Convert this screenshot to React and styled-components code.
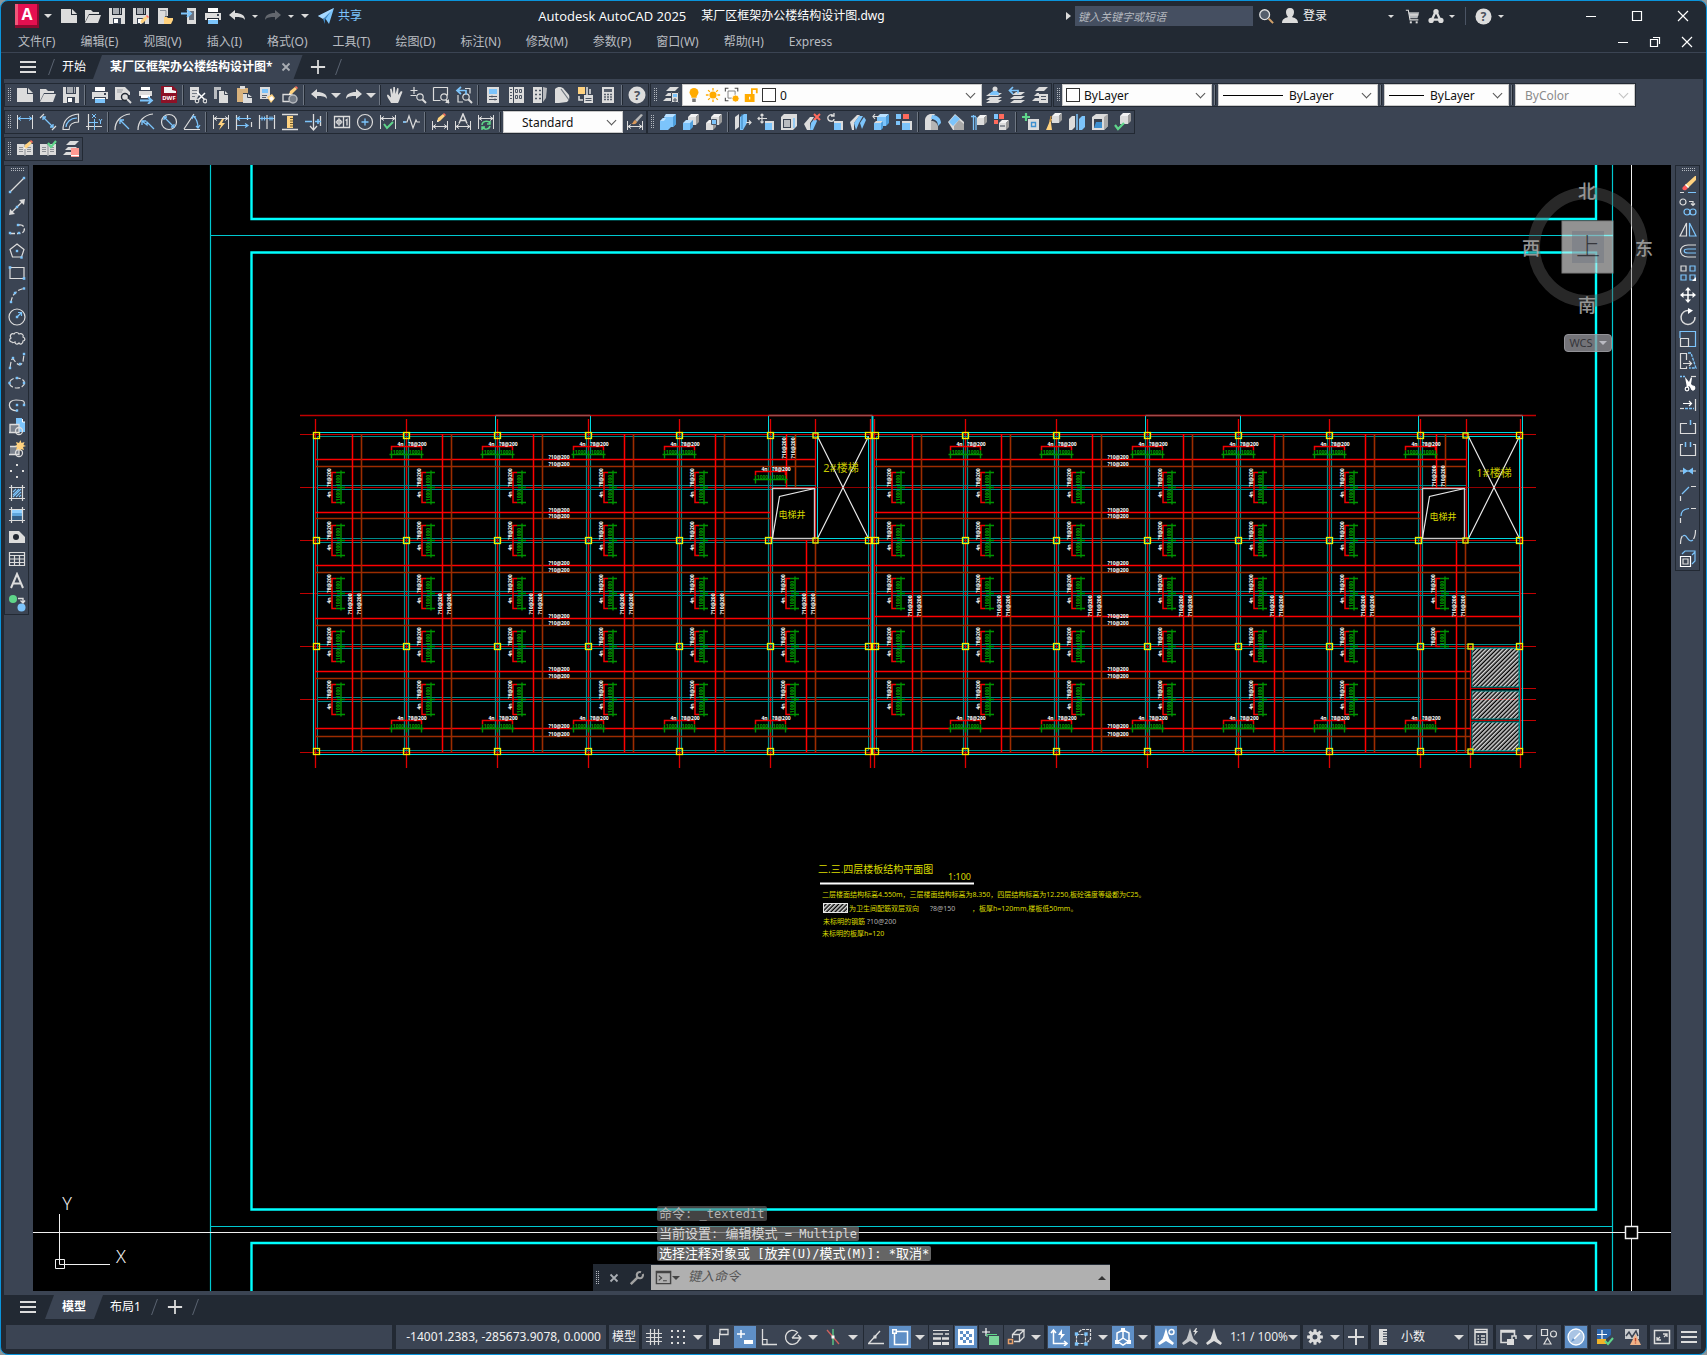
import React from "react";
import styled, { createGlobalStyle, css } from "styled-components";

/* ---------- palette ---------- */
const DARK = "#222933";
const MID = "#3b4453";
const ACCENT = "#5f8fc6";
const W = "#dcdcdc";
const B = "#7cc4fb";
const Y = "#ffd27f";
const G = "#5fd58a";
const R = "#ff6a5c";

const SANS = `"Noto Sans", "Noto Sans CJK SC", sans-serif`;
const MONO = `"DejaVu Sans Mono", "Noto Sans CJK SC", monospace`;

const Global = createGlobalStyle`
  *, *::before, *::after { box-sizing: border-box; }
  html, body { margin: 0; height: 100%; background: #8c979c; }
  body { font: 12px/16px ${SANS}; color: #f2f2f2; overflow: hidden; }
  button, input, select { font: inherit; color: inherit; margin: 0; border: 0; padding: 0; background: none; outline: 0; }
  a { color: inherit; text-decoration: none; }
`;

/* ---------- icon drawing helpers (18 x 18 grid) ---------- */
const g = (...k) => React.createElement("g", null, ...k);
const p = (d, c = W, w = 1.2, extra) => <path d={d} fill="none" stroke={c} strokeWidth={w} {...extra} />;
const f = (d, c = W) => <path d={d} fill={c} />;
const at = (x, y, node) => <g transform={`translate(${x} ${y})`}>{node}</g>;
const dots = (c, s, ...pts) => g(...pts.map(([x, y]) => <rect x={x - s / 2} y={y - s / 2} width={s} height={s} fill={c} />));
const circ = (x, y, r, c = W, w = 1.2, fill = "none") => <circle cx={x} cy={y} r={r} fill={fill} stroke={c} strokeWidth={w} />;
const pencil = g(f("M0 9l1-4 5-4 2 2-5 5z", Y), f("M6 1l1-1 2 2-1 1z", R), f("M0 9l.5-2L2 8.500z", "#fff"));
const cube = (x, y, s, front = B, side = "#a8a8a8", top = W, d = 4) =>
  g(
    f(`M${x} ${y + d}h${s}v${s}h-${s}z`, front),
    f(`M${x} ${y + d}l${d}-${d}h${s}l-${d} ${d}z`, top),
    f(`M${x + s} ${y + d}l${d}-${d}v${s}l-${d} ${d}z`, side)
  );
const disk = g(
  f("M1 1h3v7h10V1h3v16H1z"), f("M5 1h6v6H5zM12 1h1v6h-1z", "#a9adb3"), f("M5 11h8v6H5z", MID), f("M6 12h4v4H6z", "#fff"));
const printer = g(f("M4 1h10v4H4z", "#fff"), f("M1 6h16v7h-2v-2H3v2H1z"), f("M13 7h2v2h-2z", MID), f("M4 12h10v5H4z", B), p("M4 12.500h10", "#fff", 1));
const dimBar = (c = W) => g(p("M1.500 2v14M16.500 2v14", W, 1), p("M2 5.500h14M5 3.500l-3 2 3 2M13 3.500l3 2-3 2", c, 1));
const book = g(f("M1 4h7l1 1 1-1h7v11h-7l-1 1-1-1H1z"), p("M9 5v10M3 7.500h4M3 9.500h4M3 11.500h4M11 7.500h4M11 9.500h4M11 11.500h4", "#8c9096", 1));
const layers = (c = W) => g(f("M8 1h9l-4 4H4z", c), f("M6 7h9l-3 3H3z", c), f("M4 12h9l-3 3H1z", c));
const wedge = g(f("M1 9l7-7 3 0-6 8v7H3z", W), f("M5 10l5-7 4 0-4 7-3 7z", B), f("M11 10l4-6 2 3-4 9z", B));
const gearD = (() => {
  let d = "";
  for (let i = 0; i < 8; i++) {
    const a = (i * Math.PI) / 4;
    const pt = (r, o) => `${(9 + r * Math.cos(a + o)).toFixed(2)} ${(9 + r * Math.sin(a + o)).toFixed(2)}`;
    d += `${i ? "L" : "M"}${pt(5.5, -0.3)}L${pt(8, -0.18)}L${pt(8, 0.18)}L${pt(5.5, 0.3)}`;
  }
  return d + "zM9 6.500a2.500 2.500 0 1 0 0 5 2.500 2.500 0 0 0 0-5z";
})();
const person = "M9 1c3 0 4 2 4 4s-1 4-2 5c3 1 6 2 6 6H1c0-4 3-5 6-6-1-1-2-3-2-5s1-4 4-4z";
const scaleMan = "M9 0l2 7 1.500 4 4.500 4-1.500 2L9 13l-6.500 4L1 15l4.500-4L7 7z";

const ICONS = {
  new: g(f("M1 2h10v6h6v8H1z"), f("M12 2l5 5h-5z")),
  open: g(f("M1 3h6l2 2h6v2H5l-4 8z"), f("M5 8h12l-3 8H1z")),
  save: disk,
  saveas: g(disk, at(8, 8, pencil)),
  openMobile: g(f("M2 1h10v8H9l-1 8H2z"), p("M4 3.500h6v7", "#8a9099", 1), f("M8 10h3l1 1h5v2h-5l-2 4H8z", Y), f("M11 13h6l-2 4H9z", Y)),
  saveMobile: g(f("M7 1h9v16H7z"), f("M9 4h5v9H9z", "#6b7380"), p("M1 6.500h9M7 3l4 3.500L7 10", B, 1.800)),
  print: printer,
  undo: g(f("M1 8l6-5v3c6 0 10 2 10 7-2-3-5-3-10-3v3z")),
  redo: g(f("M17 8l-6-5v3C5 6 1 8 1 13c2-3 5-3 10-3v3z")),
  send: g(f("M1 9l16-8-5 16-4-6z", B), f("M6 12l8-8-6 9v4z", "#3f86c0"), f("M1 9l16-8L6 12z", "#a6d8ff")),
  preview: g(f("M1 1h10l5 5v3H1zM1 8h8v6H1z"), p("M3 4h6M3 6h5", "#9a9da2", 1), circ(11, 11, 3.5, "#222933", 1.4, W), p("M13 13l4 4", W, 2)),
  publish: g(f("M4 1h9v3H4z", "#fff"), f("M2 5h13v5H2z"), f("M4 9h9v3H4z", "#fff"), p("M3 14.500h12M11 11l4 3.500L11 18", B, 1.800)),
  dwf: g(f("M1 0h12l4 4v13H1z", "#8d1126"), f("M4 1h8v3l4 1v2H4z", "#f4f4f4"), <text x="9" y="14" textAnchor="middle" fontSize="6" fontWeight="700" fill="#fff">DWF</text>),
  cut: g(f("M1 1h9v8l-3 5H1z"), p("M3 4.500h5M3 7.500h5M3 10.500h3", "#777d86", 1), p("M8 6l8 8M16 7l-7 7", "#fff", 1.500), circ(8, 15, 1.800), circ(16, 15, 1.800)),
  copy: g(f("M2 1h7v3H5v9H2z", "#b9bcc0"), f("M7 5h6l3 3v9H7z"), p("M12.500 5v3.500H16", MID, 1)),
  paste: g(f("M2 2h11v5H8v9H2z", "#d9b27c"), f("M5 0h5v3H5z"), f("M8 8h5l4 3v6H8z"), p("M12.500 8v3.500H17", MID, 1)),
  match: g(f("M2 1h10v12H2z"), f("M4 3h6v4H4z", B), p("M4 9.500h5M4 11.500h4", "#5c6470", 1), f("M9 11l5-3 3 4-4 5z", Y), f("M11 12l3-2 2 3-3 2z", "#fff")),
  blockEdit: g(p("M2 8.500h9v7H2z", W, 1.300), circ(12, 13, 4, "#b5b8bd", 1.500, "#747b86"), at(8, 0, pencil)),
  pan: g(f("M5 17c-1-3-4-5-4-8l1-.5 3 3L4 3l1.500-.5L7 8l.3-7h1.600L9.500 8l1.700-6 1.400.4L12 9l3-4 1.500.8L14 12c-.5 2-1 3-2 5z")),
  zoomRt: g(p("M5 1v7M1.500 4.500h7M1.500 9.500h6", W, 1.200), circ(11, 11, 3.200), p("M13.500 13.500l3.500 3.500", W, 2)),
  zoomWin: g(p("M1.500 1.500h14v8M1.500 1.500v13h7", W, 1.200), circ(12, 11, 3.200), p("M14 14l3 3", W, 2), f("M13 17h4v-4z")),
  zoomPrev: g(p("M3 9v7h5M10 2.500h5v5", W, 1.200), circ(11, 11, 3.200), p("M13.500 13.500l3.500 3.500", W, 2), p("M2 4.500h9v4M6 1L2 4.500 6 8", B, 1.700)),
  props: g(f("M3 1h12v16H3z"), f("M5 3h8v5H5z", B), p("M5 10.500h8M5 13.500h8M8 9.500v2M11 12.500v2", "#4c5563", 1)),
  dc: g(f("M2 1h4v16H2zM7 1h10v16H7z"), p("M3 3.500h2M3 6.500h2M3 9.500h2M3 12.500h2", "#4c5563", 1), p("M8.500 3.500h2v3h-2zM12.500 3.500h2v3h-2zM8.500 9.500h2v3h-2zM12.500 9.500h2v3h-2z", "#4c5563", 1)),
  palettes: g(f("M3 1h9v16H3z"), f("M13 1l4 1-1 10-3 4z", "#b7b9bd"), p("M5 4.500h2M9 4.500h2M5 8.500h2M9 8.500h2M5 12.500h2M9 12.500h2", "#4c5563", 1.600)),
  sheet: g(f("M2 3c3-3 6-2 8-1l6 7c1 3 0 5-2 7L6 17H2z"), p("M8 3l8 11", "#6d747f", 1.200)),
  markup: g(f("M2 1h7v7H2z", Y), p("M11 1v8M14 3v5M3 10v4h4", W, 1.600), f("M8 9h9v8H8z"), p("M9.500 12.500h6M9.500 14.500h6", "#4c5563", 1)),
  calc: g(f("M3 1h12v16H3z"), f("M5 3h8v3H5z", "#59616e"), p("M5 8.500h8M5 11h8M5 13.500h8", "#59616e", 1.400, { strokeDasharray: "2 1" })),
  help: g(<circle cx="9" cy="9" r="8.500" fill={W} />, <text x="9" y="14" textAnchor="middle" fontSize="13" fontWeight="700" fill="#4a515c">?</text>),
  layerProps: g(layers(), f("M9 6h8v11H9z"), p("M9.500 6.500h7v10h-7z", MID, 1), f("M11 8h4v3h-4z", B), p("M13 12v4M11 14h4", "#4c5563", 1)),
  layerCur: g(f("M5 7h12l-4 3H1z", W), f("M5 11h12l-4 3H1z", W), f("M5 14h12l-4 3H1z", W), <circle cx="10" cy="3" r="2.500" fill={W} />, f("M5 9c0-3 2-4 5-4s4 1 4 4z", B)),
  layerPrev: g(f("M8 6h9l-4 3H4z", W), f("M6 10h11l-4 3H2z", W), f("M6 14h11l-4 3H2z", W), p("M1 4.500h9v3M5 1L1.500 4.500 5 8", B, 1.700)),
  layerState: g(layers(), f("M8 7h9v10H8z"), p("M8 7.500h9", MID, 1), p("M10 10.500h5M10 13.500h5", "#4c5563", 1.200)),
  dimLin: dimBar(B),
  dimAli: g(p("M1 5l4-4M13 17l4-4", W, 1.200), p("M4 4l10 10M4 7V4h3M14 11v3h-3", B, 1.300)),
  dimArc: g(p("M1 17C1 8 6 2 17 1M7 17c0-5 3-8 10-8M1 16.500h6M16.500 1v8", W, 1.200), p("M4 14C4 10 8 5 15 5", B, 1.200)),
  dimOrd: g(p("M3.500 1v16M1 13.500h16", W, 1.200), p("M9.500 6v11M4 9.500h9M7 1l4 4M11 1L7 5M14 6l1.500 2L17 6M15.500 8v3", B, 1)),
  dimRad: g(p("M1 17C1 8 7 2 16 1", W, 1.200), p("M6 7l9 9M6 11V7h4", B, 1.300)),
  dimJog: g(p("M1 17C1 8 7 2 16 1", W, 1.200), p("M5 8l5 4 0-3 7 7M5 12V8h4", B, 1.300)),
  dimDia: g(circ(9, 9, 7.500), p("M4 4l10 10M4 7V4h3M14 11v3h-3", B, 1.300)),
  dimAng: g(p("M1 16.500h16M1 16L11 1", W, 1.200), p("M10 3c4 3 5 7 5 12M9 6l1-3 3 1M13 13l2 2 2-3", B, 1.200)),
  dimQuick: g(dimBar(W), f("M10 6L6 12h3l-2 5 6-7h-3l2-4z", Y)),
  dimBase: g(p("M1.500 2v15M12.500 2v5M16.500 9v5", W, 1.200), p("M2 5.500h14M5 3.500l-3 2 3 2M2 12.500h11M10 10.500l3 2-3 2", B, 1.200)),
  dimCont: g(p("M1.500 2v14M9 2v14M16.500 2v14", W, 1.200), p("M2 5.500h14M4 3.500v4M6.500 3.500v4M12 3.500v4M14 3.500v4", B, 1.200)),
  dimSpace: g(p("M1 1.500h16M1 16.500h16", W, 1.300), f("M6 3h6v12H6z", Y), p("M9 5.500h3M9 8h3M9 10.500h3M9 13h3", "#6d5a2e", 1)),
  dimBreak: g(p("M9.500 1v16M6 13l3.500 4 3.500-4M16.500 3v10", W, 1.300), p("M1 8.500h7M11 8.500h6M14 6v5", B, 1.500)),
  tol: g(p("M1.500 3.500h15v11h-15zM10.500 3.500v11", W, 1.300), circ(6, 9, 2.200), p("M6 5v8M2.500 9h7", W, 1), p("M12.500 7.500l1.500-1v6", W, 1.400)),
  center: g(circ(9, 9, 7.500), p("M9 5.500v7M5.500 9h7", B, 1.300)),
  inspect: g(dimBar(W), p("M5 11l3 4 6-6", G, 2)),
  jogLine: g(p("M1 9h4l2-6 4 12 3-8 1 2h3", W, 1.200), p("M1 9h3", B, 1.300)),
  dimEdit: g(p("M1.500 8v9M16.500 8v9M2 13.500h14M5 11.500l-3 2 3 2M13 11.500l3 2-3 2", W, 1), at(6, 0, pencil)),
  dimTedit: g(p("M1.500 8v9M16.500 8v9M2 13.500h14M5 11.500l-3 2 3 2M13 11.500l3 2-3 2", W, 1), p("M5 10.500L9 1l4 9.500M6.500 7.500h5", W, 1.500)),
  dimUpd: g(dimBar(W), p("M5 12c0-4 6-5 8-2M13 8v3h-3M13 13c-1 4-6 4-8 1M5 17v-3h3", G, 1.500)),
  dimStyle: g(p("M1.500 8v9M16.500 8v9M2 13.500h14M5 11.500l-3 2 3 2M13 11.500l3 2-3 2", W, 1), f("M15 1l2 1-6 7-2-2z", "#b8b8b8"), f("M9 7l2 2c-1 3-4 2-6 2 2 0 2-3 4-4z", "#d9995b")),
  union: g(f("M7 1h10v10l-3 3h-2l-3 3H1V8l3-3h1z", B), f("M7 1h10l-3 3H5zM1 8l3-3h3l-2 3z", "#b9e0ff"), f("M14 4l3-3v10l-3 3z", "#4f9fdd")),
  subtract: g(cube(6, 1, 8, W, "#9b9b9b", "#f2f2f2", 3), cube(1, 7, 7, B, "#4f9fdd", "#b9e0ff", 3)),
  intersect: g(cube(6, 1, 8, W, "#9b9b9b", "#f2f2f2", 3), cube(1, 7, 7, W, "#9b9b9b", "#f2f2f2", 3), f("M7 7h5v5H7z", B), p("M6.500 6.500h5v5h-5z", "#4c5563", 1)),
  extrudeF: g(f("M1 4l4-3v13l-4 3z", W), f("M6 4l4-3h3v9l-4 7H6z", B), p("M8 1v15", "#357fb8", 1), p("M12 9.500h5M15 7.500l2 2-2 2", W, 1.200)),
  moveF: g(p("M5 1v9M1 5.500h9M3.500 2.500L5 1l1.500 1.500M3.500 8.500L5 10l1.500-1.500M2.500 4L1 5.500 2.500 7", W, 1.200), f("M8 8h9v9H8z", W), f("M8 10h7v7H8z", B)),
  offsetF: g(f("M4 1h13v12l-4 4H1V4z", W), f("M3 6h8v9H3z", MID), f("M4 7h6v7H4z", "#b9bcc0"), p("M14 5v10", B, 1.500)),
  deleteF: g(f("M1 11l6-7 4 0-4 6v7H4z", W), f("M8 10l4-5 2 3-4 9H7z", B), p("M11 1l6 6M17 1l-6 6", R, 2)),
  rotateF: g(p("M8 3C5 0 1 3 2 6s6 3 6 0M8 0v3H5", W, 1.300), f("M8 8h9v9H8z", W), f("M8 10h7v7H8z", B)),
  taperF: wedge,
  colorF: g(cube(5, 1, 9, B, "#4f9fdd", "#b9e0ff", 3), cube(2, 8, 7, B, "#4f9fdd", W, 2), p("M1 3.500h6M3 1L1 3.500 3 6", W, 1.200)),
  copyF: g(f("M1 1h5v5H1z", B), f("M8 1h6v5H8z", R), f("M1 8h4v4H1z", B), f("M7 8h10v9H7z", W), f("M7 10h8v7H7z", B)),
  fillet: g(f("M1 8C1 4 3 2 6 1h5l-4 7v9H1z", W), f("M8 2c5 0 9 3 9 8l-3 3c0-5-3-7-7-7z", B), f("M7 8c4 0 6 2 7 5v4H7z", "#b5b5b5")),
  chamfer: g(f("M1 9l7-8 9 8v8H6z", W), f("M2 9l6-7 5 4-7 7z", B), f("M7 13l5-6 5 4v6H7z", "#a9a9a9")),
  imprint: g(cube(7, 2, 7, W, "#9b9b9b", "#f2f2f2", 3), p("M3.500 2v15M6 4v13M1 3.500h5", B, 1.300)),
  colorE: g(f("M1 1h4v5H1z", B), f("M6 1h5v5H6z", R), f("M1 7h4v4H1z", R), cube(6, 7, 7, W, "#9b9b9b", "#f2f2f2", 3), p("M7 13h5", MID, 1.200)),
  imprint2: g(p("M4 0v8M0 4h8", G, 2.200), f("M6 6h11v11H6z", W), p("M9.500 9.500h4v4h-4z", "#3d8fd0", 1.400)),
  clean: g(cube(7, 0, 7, W, "#9b9b9b", "#f2f2f2", 3), f("M5 6h2l-1 4 1 7H1l3-7z", Y), p("M6 3l-1 6", "#c08b3e", 1.400)),
  separate: g(f("M1 6l3-3h3v11l-3 3H1z", W), p("M9 1v16", B, 1.500), f("M11 6l3-3h3v11l-3 3h-3z", B)),
  shell: g(f("M1 4l4-3h12v12l-4 4H1z", W), f("M13 4l4-3v12l-4 4z", "#a9a9a9"), f("M3 6h8v9H3z", "#3a4351"), f("M5 9h6v6H3z", "#3d8fd0")),
  check: g(cube(6, 0, 8, W, "#9b9b9b", "#f2f2f2", 3), p("M1 12l3 4 6-6", G, 2.200)),
  bookPen: g(book, at(8, 0, pencil)),
  bookOk: g(book, p("M9 3l3 4 5-6", G, 2.200)),
  bookLayers: g(layers(), f("M9 8h8v9H9z", "#ff9a92"), p("M9 15.500h8", "#fff", 1)),
  line: g(p("M2 16L16 2"), dots(B, 2.4, [2, 16], [16, 2])),
  xline: g(p("M3 15L15 3"), f("M1 17l1-6 5 5zM17 1l-6 1 5 5z"), dots(B, 2.4, [9, 9])),
  pline: g(p("M2 13.500h8M11 5c7-1 7 8 1 8.500", W, 1.300, { strokeDasharray: "5 2" }), dots(B, 2.4, [2, 13], [10, 5], [11, 13])),
  polygon: g(p("M9 2l7 5.500L13.500 15h-9L2 7.500z"), dots(B, 2.4, [9, 9], [13.5, 15.5])),
  rect: g(p("M2 3.500h14v11H2z"), dots(B, 2.6, [2, 3.5], [16, 14.5])),
  arc: g(p("M3 16C4 9 8 4 16 2.500", W, 1.200, { strokeDasharray: "5 2" }), dots(B, 2.4, [3, 16], [7, 7], [16, 2.5])),
  circle: g(circ(9, 9, 8), p("M9 9l4-4M10 4.500h3.500V8", B), dots(B, 2.4, [9, 9])),
  cloud: g(p("M4 12c-3 0-3-3-1-4-2-3 1-5 3-4 1-2 4-2 5 0 3-1 5 1 4 3 3 1 2 4 0 4 0 3-3 4-4 2-2 2-4 1-4-1-2 1-3 1-3 0z")),
  spline: g(p("M2 16C3 8 4 5 6 8s6 8 9 2l1-8", W, 1.200, { strokeDasharray: "6 2" }), dots(B, 2.4, [2, 16], [5, 6], [12, 12], [16, 2])),
  ellipse: g(<ellipse cx="9" cy="9" rx="7.500" ry="5" fill="none" stroke={W} strokeWidth="1.200" strokeDasharray="5 2" />, dots(B, 2.4, [9, 4], [1.5, 9], [16, 9])),
  earc: g(p("M9 15C-1 14-1 4 8 4s9 2 8 5"), dots(B, 2.4, [9, 9], [16, 9], [9, 14.5])),
  insert: g(f("M8 0h6v4h3v10H8z", B), p("M14.500 1v3H17", "#fff", 1), f("M2 7h9v8H2z", "#7b828d"), p("M1 14.500h10v-8H2v8", W, 1.300), circ(11, 13, 3.5, W, 1.300)),
  block: g(f("M2 6h9v8H2z", "#7b828d"), p("M2 6.500h9v8H1", W, 1.300), circ(11, 13, 3.5, W, 1.300), f("M12.500 0l1 3 3-1-1 3 2.500 1-3 1 1 3-3-1-1 2-1-2-3 1 1-3-2-1 2-1-1-3 3 1z", Y)),
  point: dots(W, 2, [9, 3], [3, 9], [15, 9], [9, 15]),
  hatch: g(p("M3.500 1v16M14.500 1v16M1 3.500h16M1 14.500h16"), p("M5 8l3-3M5 11l6-6M5 13l8-8M8 13l5-5M11 13l2-2", B, 1.100)),
  gradient: g(f("M4 4h10v10H4z", "#345f86"), f("M4 4h10v6H4z", "#5fa6dc"), f("M4 4h10v3H4z", "#8fd0ff"), p("M3.500 1v16M14.500 1v16M1 3.500h16M1 14.500h16")),
  region: g(f("M1 3h10l6 6v6H1z"), <circle cx="8" cy="9" r="3" fill={DARK} />),
  table: g(p("M1.500 2.500h15v13h-15zM1.500 5.500h15M1.500 9h15M1.500 12.500h15M6.500 5v10M11.500 5v10", W, 1.200)),
  mtext: g(p("M3 16L9 2l6 14M5.500 11.500h7", W, 2)),
  addSel: g(<circle cx="5" cy="5" r="4" fill={G} />, <circle cx="13.500" cy="13.500" r="4" fill={B} />, p("M10 4.500h5v4M12.500 6.500l2.500 2.500 2-2.500", W, 1.400)),
  erase: g(f("M16 0h1v4l-8 8-3-3z", Y), f("M6 9l3 3-2 2c-2 1-5-1-3-3z", "#ff5a5a"), f("M7 8l3 3-1 1-3-3z", "#fff"), p("M1 16.500h4", W), p("M9 16.500h8", B)),
  copyObj: g(circ(4, 4, 3), p("M10 3.500h4v4M12 5.500l2 2 2-2", W), circ(8, 14, 3, B), circ(14, 14, 3, B)),
  mirror: g(p("M7.500 3v13H1z"), p("M10.500 3v13H17z", B)),
  offset: g(p("M17 3H9C-1 3-1 15 9 15h8", W), p("M17 7H9c-5 0-5 4 0 4h8", B)),
  array: g(p("M2 2h5v5H2z"), p("M11 2h5v5h-5zM2 11h5v5H2zM11 11h5v5h-5z", B), f("M13 17h4v-4z", "#fff")),
  move: g(p("M9 3v12M3 9h12", "#fff", 1.500), f("M9 1l3 3.500H6zM9 17l3-3.500H6zM1 9l3.500-3v6zM17 9l-3.500-3v6z", "#fff")),
  rotate: g(p("M10 2.500A7 7 0 1 0 16 9", W, 1.500), f("M9 0l5 2.500L9 6z", "#fff")),
  scale: g(p("M1 8V1.500h15.500v15H10", B), p("M1.500 8.500h8v8h-8z", W)),
  stretch: g(p("M7.500 8V1.500h-6v15h6v-2M4 11.500h8M10 9l2.500 2.500L10 14", W), p("M9 1h3l5 15h-7", B, 1.300, { strokeDasharray: "3 1" })),
  trim: g(p("M1 2.500h6", B, 1.300, { strokeDasharray: "2 1" }), p("M12 2.500h5", W), f("M6 3l4 5 2-5 1 1-1 6 4 4-2 3-4-5-2 2z", "#fff"), circ(8, 15, 1.800, "#fff"), circ(14, 14, 1.800, "#fff")),
  extend: g(p("M16.500 3v12", W), p("M4 7.500h8M10 5l2.500 2.500L10 10", "#fff"), p("M1 12.500h4", W), p("M6 12.500h9", B, 1.300, { strokeDasharray: "3 1" })),
  breakPt: g(p("M8 5.500H1.500v10h15v-10H14"), p("M11.500 2v5", B, 1.500)),
  breakIt: g(p("M4 4.500H1.500v11h15v-11H14"), p("M6.500 2v5M11.500 2v5", B, 1.500)),
  join: g(p("M1 9h3M14 9h3"), p("M5 9h8", B), f("M4 5.500l5 3.500-5 3.500zM14 5.500L9 9l5 3.500z", B)),
  chamferE: g(p("M1.500 17v-5M12 2.500h5"), p("M3 10l7-7", B)),
  filletE: g(p("M1.500 17v-5M12 2.500h5"), p("M2 10c0-4 3-7 8-7.500", B)),
  blend: g(p("M1.500 16c0-4 0-6 2-8M16.500 2c0 4 0 6-2 9"), p("M4 8c4-3 5 8 10 4", B)),
  explode: g(p("M1.500 6.500h10v10h-10z", "#fff"), p("M4 9h5v5H4z", W), p("M3 4l3-3h10v10l-3 3M13 5l3-3", B)),
  stGrid: p("M5.500 1v16M9.500 1v16M13.500 1v16M1 5.500h16M1 9.500h16M1 13.500h16", W, 1.200),
  stDots: dots(W, 2, [3, 3], [9, 3], [15, 3], [3, 9], [9, 9], [15, 9], [3, 15], [9, 15], [15, 15]),
  stInfer: g(f("M1 11h7v6H1zM7 5h1v7H7z"), p("M8 6.500V1.500h8v5h-8", W, 1.300)),
  stDyn: g(p("M5 2v8M1 6h8", "#fff", 1.500), f("M8 12h9v4H8z", "#fff")),
  stOrtho: g(p("M2.500 1v15.500H17", W, 1.300), p("M2 11.500h5V16", W, 1.200)),
  stPolar: g(p("M13 4A7 7 0 1 0 15 12", W, 1.300), p("M8 10l6-6M8 10h9M14 7l3 3-3 3", W, 1.300)),
  stIso: g(p("M9 1v16", G, 1.300), p("M3 2l12 14", "#d1615d", 1.300), dots("#fff", 3, [9, 9])),
  stTrack: g(p("M1 15.500h16M2 15L13 3", W, 1.300), dots(W, 3, [8, 9])),
  stOsnap: g(p("M4 3.500h12.500v13h-13V5", "#fff", 1.500), f("M1 1h5v5H1z", "#fff"), f("M2.500 2.500h2v2h-2z", ACCENT)),
  stLwt: g(p("M1 2.500h16", W, 1), p("M1 6h10M13 6h4", W, 1.600), p("M1 10.500h8M10 10.500h7", W, 2.400), p("M1 15.500h8M10 15.500h7", W, 2.800)),
  stTransp: g(f("M1 1h16v16H1z", "#fff"), f("M3 3h3v3H3zM9 3h3v3H9zM6 6h3v3H6zM12 6h3v3h-3zM3 9h3v3H3zM9 9h3v3H9zM6 12h3v3H6zM12 12h3v3h-3z", ACCENT)),
  stCycle: g(p("M4 0v8M0 4h8", "#fff", 1.200), p("M5 9V6.500h10", G), f("M7 8h10v9H7z", "#7bd69a")),
  st3d: g(p("M5.500 6.500h7v7h-7zM6 6l4-4h7l-4 4M17 2v7l-4 4", W, 1.300), f("M0 10h7v7H0z", MID), p("M1.500 11.500h4v4h-4z", "#e8a06a", 1.500)),
  stUcs: g(p("M3.500 3v12.500H16M1 5l2.500-3L6 5M14 13l3 2.500-3 2.500", "#fff", 1.500), f("M12 1L8 7h3l-1 5 5-6h-3z", "#fff")),
  stFilt: g(p("M2.500 6.500h9v9h-9zM5 4l3-2.500h8.500V11l-3 3", W, 1.200, { strokeDasharray: "3 1" }), dots(B, 3.4, [2.5, 6], [12, 6], [2.5, 16], [12, 16])),
  stGizmo: g(p("M9 2v8l-6 4M9 10l6 4M9 2l6 3v8l-6 4-6-4V5z", "#fff", 1.500), f("M7 0h4v4H7zM1 12h4v4H1zM13 12h4v4h-4z", "#fff")),
  stAnno1: g(f(scaleMan, "#fff"), circ(14.5, 4, 2.5, "#fff", 1.400)),
  stAnno2: g(f(scaleMan, "#c4c6c9"), f("M15 0l-3 4h2l-1 4 4-5h-2l1-3z", W)),
  stAnno3: f(scaleMan),
  gear: <path d={gearD} fill={W} fillRule="evenodd" />,
  plus: p("M9 1v16M1 9h16", W, 2),
  ruler: g(f("M5 1h8v16H5z"), p("M9 3.500h4M9 6h4M9 8.500h4M9 11h4M9 13.500h4", MID, 1.200)),
  stQp: g(p("M3 1.500h12v15H3z", W, 1.500), p("M3 4h12", W, 2), p("M5.500 8h1.500M5.500 11h1.500M5.500 14h1.500M9 8h4M9 11h4M9 14h4", W, 1.400)),
  stLock: g(p("M8 14.500H2v-12h13.500V8M2 4h13", W, 1.600), f("M8 11h7v6H8z"), p("M13 11V8h4v3", W, 1.500)),
  stIso2: g(p("M1.500 1.500h6v6h-6z"), circ(13.5, 6, 3), p("M7.500 10l3.500 6H4z")),
  stPerf: g(circ(9, 9, 8, "#fff", 1.300, "#a9c4e4"), p("M6 12l7-7", "#fff", 1.500), f("M4 14l4-2-2-2z", ACCENT)),
  stCad: g(f("M1 1h14v6l-5 4H1z", "#2d66ac"), p("M6 2v9M1 6.500h10", "#fff", 1.200), f("M1 11l9 0v5H1z", "#f0b429"), p("M9 13l3 3 5-6", G, 2)),
  stWarn: g(f("M1 1h14v10H1z", "#c9cbce"), p("M2 8l3-4 3 5 4-6 2 5", "#3a4351", 1.500), f("M11.500 6L17 17H6z", "#f0b48a"), p("M11.500 10v3.500M11.500 14.500v1", "#c4452d", 1.400)),
  stFull: g(p("M1.500 2.500h15v13h-15z", W, 1.500), p("M10 6h4v3M14 6l-3 3M8 12H4V9M4 12l3-3", W, 1.300)),
  menu: p("M1 4h16M1 9h16M1 14h16", W, 2),
  search: g(circ(7.5, 7.5, 5.5, "#e0e0e0", 1.500, "#555e6b"), p("M12 12l5 5", "#d0a06a", 2.200)),
  user: f(person),
  cart: g(f("M4 4h13l-2 7H6z", "#b4b7bb"), p("M1 1.500h3L6 13h10M6 7h10", W, 1.300), dots(W, 2.4, [7, 16], [14, 16])),
  adesk: g(p("M9 3L4 14M9 3l5 11M5 13h8", W, 2.600), <circle cx="9" cy="4" r="3" fill={W} />, <circle cx="3.500" cy="14" r="3" fill={W} />, <circle cx="14.500" cy="14" r="3" fill={W} />),
  min: p("M4 9.500h10", "#fff", 1.200),
  max: p("M4.500 4.500h9v9h-9z", "#fff", 1.200),
  restore: g(p("M4.500 6.500h7v7h-7z", "#fff", 1.200), p("M7 4.500h6.500V11", "#fff", 1.200)),
  close: p("M4 4l10 10M14 4L4 14", "#fff", 1.200),
  tabClose: p("M5.500 5.500l7 7M12.500 5.500l-7 7", "#a9adb3", 1.800),
  wrench: g(p("M2 16L10 8", "#a2a2a2", 2.800), p("M15.500 4.500a3.500 3.500 0 1 1-2-2", "#a2a2a2", 2.400)),
  prompt: g(p("M1.500 2.500h15v13h-15z", "#444", 1.500), p("M1 3.500h16", "#444", 2), p("M4 7l3 2.500L4 12M8.500 12.500h4", "#444", 1.200)),
  bulb: g(<circle cx="9" cy="6" r="5" fill="#ffab00" />, f("M6 9h6v3H6z", "#ffab00"), f("M7 13h4v4H7z", "#777")),
  sun: g(<circle cx="9" cy="9" r="4" fill="#ffab00" />, p("M9 1v3M9 14v3M1 9h3M14 9h3M3.500 3.500l2 2M12.500 12.500l2 2M14.500 3.500l-2 2M5.500 12.500l-2 2", "#ffab00", 1.500)),
  vpSun: g(p("M4.500 4.500h8v8h-8z", "#777", 1), p("M1.500 5V1.500H5M12 1.500h3.500V5M1.500 12v3.500H5", "#444", 1.200), <circle cx="13" cy="13" r="4" fill="#ffab00" stroke="#fff" />),
  lock: g(f("M2 8h11v9H2z", "#ffab00"), p("M10 8V2.500h5.500V7", "#ffab00", 2), p("M7.500 11v3", "#fff", 1.300)),
};

const Icon = ({ n, s = 18 }) => (
  <svg width={s} height={s} viewBox="0 0 18 18" aria-hidden="true">{ICONS[n]}</svg>
);

/* ---------- shared controls ---------- */
const IconButton = styled.button`
  flex: none;
  display: flex;
  align-items: center;
  justify-content: center;
  width: ${(o) => o.$w || 23}px;
  height: ${(o) => o.$h || 22}px;
  opacity: ${(o) => (o.$dim ? 0.35 : 1)};
  background: ${(o) => (o.$on ? ACCENT : "transparent")};
  ${(o) => o.$inset && css`border: 1px solid ${MID};`}
  svg { display: block; }
`;
const CaretShape = styled.span`
  flex: none;
  border: ${(o) => o.$s || 4}px solid transparent;
  border-bottom: 0;
  border-top-color: ${(o) => o.$c || W};
`;
const Caret = ({ w = 12, h = 22, s = 4, label = "展开" }) => (
  <IconButton $w={w} $h={h} aria-label={label}><CaretShape $s={s} /></IconButton>
);
const Slash = styled.span`
  flex: none;
  width: 1px;
  height: 16px;
  margin: 0 ${(o) => o.$m || 10}px;
  background: #5b6472;
  transform: skewX(-20deg);
`;

/* ---------- window frame ---------- */
const Window = styled.div`
  display: flex;
  flex-direction: column;
  height: 100vh;
  border: 1px solid #0a94dc;
  border-radius: 8px;
  overflow: hidden;
  background: ${DARK};
`;
const TitleBar = styled.header`
  display: flex;
  align-items: center;
  height: 30px;
  flex: none;
`;
const Spacer = styled.div`flex: 1;`;
const Group = styled.div`
  display: flex;
  align-items: center;
  flex: none;
  padding-left: ${(o) => o.$pl || 0}px;
`;
const Logo = styled.button`
  width: 24px;
  height: 24px;
  display: flex;
  justify-content: center;
  background: linear-gradient(90deg, #f0577a 0 3px, #e51050 3px 22px, #8d0a30 22px);
  border-bottom: 3px solid #8d0a30;
  color: #fff;
  font: 700 16px/20px "Open Sans", sans-serif;
`;
const Share = styled.button`
  display: flex;
  align-items: center;
  gap: 3px;
  padding-left: 4px;
  color: ${B};
`;
const Title = styled.h1`
  display: flex;
  gap: 15px;
  margin: 0;
  font: 400 13px/18px "Open Sans", sans-serif;
  color: #fff;
  span + span { font: 12px/18px ${SANS}; }
`;
const RightCaret = styled.button`
  width: 14px;
  height: 20px;
  display: flex;
  align-items: center;
  justify-content: center;
  &::before { content: ""; border: 4px solid transparent; border-left: 5px solid ${W}; border-right: 0; }
`;
const SearchInput = styled.input`
  width: 178px;
  height: 20px;
  padding: 0 3px;
  background: #454f61;
  font-style: italic;
  font-size: 11px;
  &::placeholder { color: #b4b8bf; opacity: 1; }
`;
const Login = styled.button`
  display: flex;
  align-items: center;
  gap: 4px;
  width: 105px;
  padding-left: 2px;
`;
const Rule = styled.span`
  width: 1px;
  height: 18px;
  margin: 0 6px 0 7px;
  background: #4b5464;
`;
const MenuBar = styled.nav`
  display: flex;
  align-items: center;
  flex: none;
  height: 22px;
  padding: 0 3px 0 17px;
  border-bottom: 1px solid ${MID};
  color: #b9bcc1;
`;
const MenuList = styled.div`
  display: flex;
  gap: 25px;
  flex: 1;
  a { white-space: nowrap; }
`;
const TabRow = styled.div`
  display: flex;
  align-items: center;
  flex: none;
  height: ${(o) => o.$h}px;
  padding: ${(o) => o.$pt || 0}px 0 0 14px;
`;
const Tab = styled.button`
  display: flex;
  align-items: center;
  gap: 4px;
  height: 24px;
  color: #fff;
  padding: 0 ${(o) => (o.$on ? o.$pr || 17 : 0)}px 0 ${(o) => (o.$on ? 17 : 0)}px;
  margin-right: ${(o) => (o.$on && o.$pr ? 4 : 7)}px;
  font-weight: ${(o) => (o.$on ? 600 : 400)};
  background: ${(o) => (o.$on ? MID : "transparent")};
  clip-path: ${(o) => (o.$on ? "polygon(9px 0, 100% 0, calc(100% - 9px) 100%, 0 100%)" : "none")};
`;

/* ---------- toolbars ---------- */
const Body = styled.div`
  flex: 1;
  min-height: 0;
  display: flex;
  flex-direction: column;
  margin: 0 3px;
  padding-bottom: 4px;
  background: ${MID};
`;
const ToolRows = styled.div`
  display: flex;
  flex-direction: column;
  gap: 3px;
  padding: 4px 0;
  flex: none;
`;
const ToolRow = styled.div`
  display: flex;
  gap: ${(o) => (o.$tight ? 0 : 1)}px;
`;
const Bar = styled.div`
  display: flex;
  flex: none;
  flex-direction: ${(o) => (o.$v ? "column" : "row")};
  align-items: center;
  border: 1px solid ${DARK};
  ${(o) => (o.$v ? "width: 25px;" : "height: 24px;")}
`;
const Grip = styled.span`
  flex: none;
  width: ${(o) => (o.$v ? 14 : 4)}px;
  height: ${(o) => (o.$v ? 4 : 14)}px;
  margin: 2px;
  background: conic-gradient(#b4b9c0 25%, transparent 0) 0 0 / 2px 2px;
`;
const Sep = styled.span`
  flex: none;
  width: 2px;
  height: 20px;
  margin: 0 2px;
  background: #6f7783;
  border-right: 1px solid ${DARK};
`;
const Combo = styled.label`
  position: relative;
  display: flex;
  align-items: center;
  gap: 3px;
  flex: none;
  width: ${(o) => o.$w}px;
  height: 22px;
  padding-left: ${(o) => o.$pl || 6}px;
  background: #fdfdfd;
  border: 1px solid #c9c9c9;
  color: ${(o) => (o.$off ? "#8b8b8b" : "#111")};
  select { appearance: none; flex: 1; min-width: 0; height: 20px; padding-top: 1px; }
  select:disabled { opacity: 1; color: #8b8b8b; }
  &::after {
    content: "";
    position: absolute;
    right: 7px;
    top: 5px;
    width: 7px;
    height: 7px;
    border: solid ${(o) => (o.$off ? "#c0c0c0" : "#555")};
    border-width: 0 1px 1px 0;
    transform: rotate(45deg);
  }
`;
const Swatch = styled.span`
  flex: none;
  width: 14px;
  height: 14px;
  margin-right: 1px;
  border: 1px solid #333;
  background: #fff;
`;
const Stroke = styled.span`
  flex: none;
  width: ${(o) => o.$w}px;
  height: 1px;
  margin-right: 3px;
  background: #000;
`;

const Tools = ({ items }) =>
  items.map((n, i) =>
    n === "|" ? <Sep key={i} /> : n === "v" ? <Caret key={i} s={5} /> : <IconButton key={i} aria-label={n} $h={22}><Icon n={n} /></IconButton>
  );

const STD = "new open save | print preview publish dwf | cut copy paste match blockEdit | undo v redo v | pan zoomRt zoomWin zoomPrev | props dc palettes sheet markup calc | help".split(" ");
const DIM = "dimLin dimAli dimArc dimOrd | dimRad dimJog dimDia dimAng | dimQuick dimBase dimCont dimSpace dimBreak | tol center inspect jogLine | dimEdit dimTedit dimUpd |".split(" ");
const SOLID = "union subtract intersect | extrudeF moveF offsetF deleteF rotateF taperF colorF copyF | fillet chamfer imprint colorE | imprint2 clean separate shell check".split(" ");
const DRAW = "line xline pline polygon rect arc circle cloud spline ellipse earc insert block point hatch gradient region table mtext addSel".split(" ");
const MODIFY = "erase copyObj mirror offset array move rotate scale stretch trim extend breakPt breakIt join chamferE filletE blend explode".split(" ");

/* ---------- workspace ---------- */
const Work = styled.div`
  flex: 1;
  min-height: 0;
  display: grid;
  grid-template-columns: 29px 1fr 32px;
`;
const Side = styled.aside`
  padding-left: ${(o) => o.$pl || 0}px;
`;
const Canvas = styled.main`
  position: relative;
  min-width: 0;
  min-height: 0;
  overflow: hidden;
  background: #000;
`;
const Sheet = styled.svg`
  display: block;
  width: 100%;
  height: 100%;
  font-family: ${SANS};
`;
const CubeBox = styled.div`
  position: absolute;
  top: 13px;
  right: 13px;
  display: flex;
  flex-direction: column;
  align-items: center;
  gap: 18px;
  opacity: 0.9;
`;
const Wcs = styled.button`
  display: flex;
  align-items: center;
  justify-content: center;
  gap: 6px;
  width: 48px;
  height: 18px;
  border-radius: 4px;
  border: 1px solid #a2a2a8;
  background: rgba(150, 150, 158, 0.85);
  color: #3c3c42;
  font-size: 11px;
`;
const CommandBox = styled.section`
  position: absolute;
  left: 560px;
  bottom: 0;
  width: 517px;
  display: flex;
  flex-direction: column;
`;
const History = styled.div`
  display: flex;
  flex-direction: column;
  align-items: flex-start;
  gap: 5px;
  padding: 0 0 3px 64px;
`;
const HistoryLine = styled.output`
  padding: 0 2px;
  height: 15px;
  border-radius: 2px;
  font: 12px/15px ${MONO};
  white-space: pre;
  color: ${(o) => o.$c};
  background: rgba(112, 112, 112, ${(o) => o.$a});
  i { font-style: normal; font-size: 13px; }
`;
const CommandBar = styled.div`
  display: flex;
  align-items: center;
  height: 27px;
  background: ${DARK};
`;
const CommandField = styled.div`
  flex: 1;
  display: flex;
  align-items: center;
  height: 25px;
  margin-left: 4px;
  padding-left: 3px;
  background: #b0b0b0;
  input { flex: 1; min-width: 0; height: 23px; margin-left: 8px; padding-bottom: 3px; font: italic 13px/18px ${SANS}; color: #333; }
  input::placeholder { color: #555; opacity: 1; }
`;
const UpShape = styled.span`
  border: 4px solid transparent;
  border-top: 0;
  border-bottom-color: #333;
`;

/* ---------- status bar ---------- */
const Status = styled.footer`
  display: flex;
  flex: none;
  gap: 3px;
  padding: 6px 5px 5px;
`;
const Cluster = styled.div`
  display: flex;
  flex: none;
  gap: 1px;
`;
const Cell = styled.div`
  display: flex;
  align-items: center;
  justify-content: ${(o) => o.$end || "center"};
  flex: ${(o) => (o.$grow ? "1 1 0" : "none")};
  min-width: 0;
  width: ${(o) => (o.$w ? o.$w + "px" : "auto")};
  height: 24px;
  padding-right: ${(o) => o.$pr || 0}px;
  margin-right: ${(o) => o.$mr || 0}px;
  background: ${MID};
  white-space: nowrap;
`;
const ScaleButton = styled.button`
  display: flex;
  align-items: center;
  justify-content: space-between;
  width: 74px;
  padding: 0 3px 0 4px;
  font-family: "Open Sans", sans-serif;
`;
const UnitLabel = styled.label`
  display: flex;
  align-items: center;
  width: 73px;
  padding: 0 4px 0 6px;
  select { appearance: none; flex: 1; min-width: 0; }
`;

/* items: icon name, "*name" when switched on, "v" for a drop-down arrow */
const StatusCell = ({ items, w = 24, pr }) => (
  <Cell $pr={pr}>
    {items.split(" ").map((n, i) =>
      n === "v" ? (
        <Caret key={i} w={16} h={24} s={5} />
      ) : (
        <IconButton key={i} $w={w} $h={24} $on={n[0] === "*"} $inset={n[0] === "*"} aria-label={n.replace("*", "")}>
          <Icon n={n.replace("*", "")} />
        </IconButton>
      )
    )}
  </Cell>
);

/* ---------- plan drawing ---------- */
const AXL = [406.5, 497.5, 588.5, 679.5, 770.5];
const AXR = [965.5, 1056.5, 1147.5, 1238.5, 1329.5, 1420.5];
const ROWS = [487.5, 540.5, 593.5, 646.5, 699.5];
const L = ({ a, c, w = 1 }) => <line x1={a[0]} y1={a[1]} x2={a[2]} y2={a[3]} stroke={c} strokeWidth={w} />;
const Tiny = ({ x, y, t, c = "#fff", r, s = 5 }) => (
  <text x={x} y={y} fontSize={s} fontWeight="700" fill={c} textAnchor="middle" transform={r ? `rotate(-90 ${x} ${y})` : undefined}>{t}</text>
);
const VMark = ({ x, y, half }) => {
  const b = half ? 0 : 15;
  return (
    <g>
      <path d={`M${x + 4} ${y - 15}h-4V${y + b}h4`} fill="none" stroke="#f00000" strokeWidth="1.500" />
      <path d={`M${x + 9} ${y - 17}V${y + b + 2}M${x + 4} ${y - 15}h9M${x + 5} ${y}h8M${x + 4} ${y + b}h9`} fill="none" stroke="#009200" strokeWidth="1.400" />
      <Tiny x={x - 1} y={y - 10} t="?8@200" r />
      {!half && <Tiny x={x - 1} y={y + 7} t="4n" r />}
      <Tiny x={x + 8} y={y - 7} t="1000" c="#00a000" r />
      {!half && <Tiny x={x + 8} y={y + 8} t="1000" c="#00a000" r />}
    </g>
  );
};
const HMark = ({ x, y }) => (
  <g>
    <path d={`M${x - 15} ${y + 4}v-4h30v4`} fill="none" stroke="#f00000" strokeWidth="1.500" />
    <path d={`M${x - 17} ${y + 8}h34M${x - 15} ${y + 4}v8M${x} ${y + 4}v8M${x + 15} ${y + 4}v8`} fill="none" stroke="#009200" strokeWidth="1.400" />
    <Tiny x={x - 6} y={y - 1} t="4n" />
    <Tiny x={x + 11} y={y - 1} t="?8@200" />
    <Tiny x={x - 8} y={y + 7} t="1000" c="#00a000" />
    <Tiny x={x + 8} y={y + 7} t="1000" c="#00a000" />
  </g>
);
const Post = ({ x, y, s = 7 }) => (
  <rect x={Math.round(x) - s / 2} y={Math.round(y) - s / 2} width={s - 1} height={s - 1} fill="none" stroke="#f2ee00" strokeWidth="1.300" />
);

const Plan = () => {
  const teal = "#008a8a", cyan = "#00d8e0", red = "#ff0000", axis = "#c00000", brown = "#9c2c00";
  const slabs = [[459.5, 466.5], [512.5, 518.5], [565.5, 572.5], [618.5, 625.5], [671.5, 678.5], [728.5, 736.5]];
  const endL = [816, 770, 870, 870, 870, 870], endR = [1466, 1420, 1521, 1521, 1471, 1471];
  const vert = [352.5, 442.5, 533.5, 624.5, 715.5, 806.5, 912.5, 1001.5, 1092.5, 1183.5, 1274.5, 1365.5, 1456.5];
  return (
    <g>
      {/* axes */}
      <L a={[300, 415.5, 1536, 415.5]} c={axis} w={1.3} />
      {[434.5, ...ROWS, 752.5].map((y) => <L key={y} a={[300, y, 1536, y]} c={axis} w={1.2} />)}
      {[688.5, 720.5].map((y) => <L key={y} a={[1471, y, 1536, y]} c={axis} />)}
      {[315.5, ...AXL, 870.5, 874.5, ...AXR, 1520.5].map((x) => <L key={x} a={[x, 419, x, 768]} c="#e00000" w={1.3} />)}
      {[815.5, 1466.5].map((x) => <L key={x} a={[x, 419, x, 541]} c="#e00000" w={1.3} />)}
      <L a={[1470.5, 646, 1470.5, 768]} c="#e00000" w={1.3} />
      {/* beams */}
      {[...AXL, ...AXR].map((x) => [-2, 2].map((o) => <L key={x + o} a={[x + o, 433, x + o, 752]} c={teal} w={1.2} />))}
      {ROWS.map((y, i) => [-2, 2].map((o) => (
        <g key={y + o}>
          <L a={[317, y + o, i === 0 ? 816 : 869, y + o]} c={teal} w={1.2} />
          <L a={[877, y + o, i === 0 ? 1466 : i === 4 ? 1420 : 1519, y + o]} c={teal} w={1.2} />
        </g>
      )))}
      <path d="M317.500 436.500H868.500V750.500H317.500zM876.500 436.500H1519.500V750.500H876.500z" fill="none" stroke={teal} />
      <path d="M313.500 754.500V432.500H1522.500V754.500z" fill="none" stroke={cyan} strokeWidth="1.200" />
      <L a={[872.5, 416, 872.5, 755]} c="#00c4cc" w={2} />
      {[[495.5, 590.5], [768.5, 872.5], [1145.5, 1240.5], [1418.5, 1522.5]].map(([a, b]) => (
        <g key={a}>
          <path d={`M${a} 433V416M${b} 433V416`} stroke={cyan} />
          <L a={[a, 415.5, b, 415.5]} c="#a04a4a" w={1.6} />
        </g>
      ))}
      {/* slab reinforcement */}
      {slabs.map(([a, b], i) => (
        <g key={a}>
          <L a={[315, a, endL[i], a]} c={red} w={1.5} />
          <L a={[315, b, endL[i], b]} c={brown} w={1.6} />
          <L a={[875, i === 3 ? 616.5 : a, endR[i], i === 3 ? 616.5 : a]} c={red} w={1.5} />
          <L a={[875, b, endR[i], b]} c={brown} w={1.6} />
          {[559, 1118].map((x) => (
            <g key={x}>
              <Tiny x={x} y={a - 1} t="?10@200" />
              <Tiny x={x} y={b - 1} t="?10@200" />
            </g>
          ))}
        </g>
      ))}
      {vert.map((x) => {
        const top = x === 806.5 || x === 1456.5 ? 540 : 434;
        return (
          <g key={x}>
            <L a={[x, top, x, 752]} c={red} w={1.5} />
            <L a={[x + 9, top, x + 9, 752]} c={brown} w={1.6} />
            <Tiny x={x - 1} y={x < 880 ? 604 : 606} t="?10@200" r />
            <Tiny x={x + 8} y={x < 880 ? 604 : 606} t="?10@200" r />
          </g>
        );
      })}
      {[[786.5, 448], [1436.5, 476]].map(([x, y]) => (
        <g key={x}>
          <L a={[x, 434, x, 488]} c={red} w={1.5} />
          <L a={[x + 9, 434, x + 9, 488]} c={brown} w={1.6} />
          <Tiny x={x - 1} y={y} t="?10@200" r />
          <Tiny x={x + 8} y={y} t="?10@200" r />
        </g>
      ))}
      {/* support bars */}
      {[332, ...[406, 497, 588, 679].map((x) => x + 16), 892, ...[965, 1056, 1147, 1238, 1329].map((x) => x + 16)].map((x) =>
        ROWS.map((y) => <VMark key={x + "-" + y} x={x} y={y} />))}
      {[593.5, 646.5, 699.5].map((y) => <VMark key={y} x={786} y={y} />)}
      <VMark x={1436} y={593.5} />
      <VMark x={1436} y={646.5} half />
      {[...AXL, ...AXR].map((x) => (
        <g key={x}>
          <HMark x={x} y={x === 770.5 ? 471.5 : 446.5} />
          <HMark x={x} y={720.5} />
        </g>
      ))}
      {/* lift shafts and stairs */}
      {[[772.5, 817.5, 868.5, "2#楼梯", 841, 472, 792, 518], [1422.5, 1468.5, 1519.5, "1#楼梯", 1494, 477, 1443, 520]].map((s) => (
        <g key={s[0]}>
          <rect x={s[0]} y="488.500" width="42" height="50" fill="#000" stroke="#c8c8c8" strokeWidth="1.400" />
          <path d={`M${s[0]} 538l7-41.500 35-8`} fill="none" stroke="#e8e8e8" strokeWidth="1.200" />
          <rect x={s[1]} y="436.500" width={s[2] - s[1]} height="102" fill="#000" stroke={cyan} />
          <L a={[s[1], 487.5, s[2], 487.5]} c="#900000" />
          <path d={`M${s[1]} 436.500L${s[2]} 538.500M${s[2]} 436.500L${s[1]} 538.500`} stroke="#e8e8e8" strokeWidth="1.200" />
          <text x={s[4]} y={s[5]} fontSize="11" fill="#c8c800" textAnchor="middle">{s[3]}</text>
          <text x={s[6]} y={s[7]} fontSize="9" fill="#d8d800" textAnchor="middle">电梯井</text>
        </g>
      ))}
      {/* washroom hatch */}
      {[[648, 39], [691, 28], [722, 29]].map(([y, h]) => (
        <rect key={y} x="1472" y={y} width="47" height={h} fill="url(#hatch)" stroke={teal} />
      ))}
      {/* columns */}
      {[436, 541, 647, 752].map((y, r) => (
        <g key={y}>
          {[316.5, 406.5, 497.5, 588.5, 679.5, r === 1 ? 768.5 : 770.5, 869, 876, 965.5, 1056.5, 1147.5, 1238.5, 1329.5, r === 1 ? 1418.5 : 1420.5, 1519.5].map((x) => (
            <Post key={x} x={x} y={y} />
          ))}
          {r < 2 && <Post x={816} y={y} s={6} />}
          <Post x={r < 2 ? 1466 : 1470.5} y={y} s={6} />
        </g>
      ))}
    </g>
  );
};

const Notes = () => (
  <g fill="#dcdc00" fontSize="7">
    <text x="818" y="873" fontSize="10">二.三.四层楼板结构平面图</text>
    <text x="948" y="880" fontSize="9">1:100</text>
    <L a={[820, 883.5, 974, 883.5]} c="#fff" w={2} />
    <text x="822" y="897">二层楼面结构标高4.550m，三层楼面结构标高为8.350，四层结构标高为12.250,板砼强度等级都为C25。</text>
    <rect x="823.500" y="903.500" width="24" height="9" fill="url(#hatch)" stroke="#e8e8e8" />
    <text x="849" y="911">为卫生间配筋双层双向</text>
    <text x="930" y="911" fill="#b0b0b0">?8@150</text>
    <text x="972" y="911">，板厚h=120mm,楼板低50mm。</text>
    <text x="823" y="924">未标明的钢筋</text>
    <text x="867" y="924" fill="#b0b0b0">?10@200</text>
    <text x="822" y="936">未标明的板厚h=120</text>
  </g>
);

const Drawing = () => {
  const thin = "#00c8d0", thick = "#00ffff";
  return (
    <Sheet viewBox="33 165 1638 1126" preserveAspectRatio="xMidYMid slice" role="img" aria-label="二.三.四层楼板结构平面图">
      <defs>
        <pattern id="hatch" width="3" height="3" patternUnits="userSpaceOnUse" patternTransform="rotate(45)">
          <rect width="1.600" height="3" fill="#d8d8d8" />
        </pattern>
      </defs>
      <path d="M210.500 165V1291M1612.500 165V1291M210 235.500H1612.500M210 1226.500H1612.500" stroke={thin} strokeWidth="1.200" fill="none" />
      <path d="M251.500 165V219H1596V165M251.500 252.500H1596V1209.500H251.500zM251.500 1291V1243H1596V1291" stroke={thick} strokeWidth="2.400" fill="none" />
      <Plan />
      <Notes />
      <g stroke="#f0f0f0" fill="none">
        <path d="M1631.500 165V1226M1631.500 1239V1291M33 1232.500H1625M1638 1232.500H1671" />
        <rect x="1625.500" y="1226.500" width="12" height="12" strokeWidth="1.500" />
        <path d="M59.500 1214V1264.500H110M55.500 1259.500h9v9h-9z" />
      </g>
      <g fill="#f0f0f0" fontSize="18" fontWeight="300" textAnchor="middle">
        <text x="67" y="1210">Y</text>
        <text x="121" y="1263">X</text>
      </g>
    </Sheet>
  );
};

const ViewCube = () => (
  <svg width="140" height="138" viewBox="1518 178 140 138" fontFamily={SANS} role="img" aria-label="上">
    <circle cx="1588" cy="247" r="54" fill="none" stroke="rgba(90,90,90,.5)" strokeWidth="12" />
    <rect x="1562" y="221" width="51" height="52" fill="rgba(190,190,190,.85)" stroke="#8a8a8a" />
    <path d="M1562 235.500H1613M1562 252.500H1596.500V273" stroke="#8ff" strokeWidth="1.500" fill="none" opacity=".8" />
    <rect x="1572" y="231" width="32" height="32" fill="rgba(130,135,145,.55)" />
    <text x="1588" y="255" fontSize="24" fontWeight="300" textAnchor="middle" fill="#3c3e44" fontFamily='"Noto Sans CJK SC", sans-serif'>上</text>
    <g fontSize="18" fontWeight="500" textAnchor="middle" fill="#a6a6a6">
      <text x="1587" y="198">北</text>
      <text x="1587" y="312">南</text>
      <text x="1531" y="255">西</text>
      <text x="1644" y="255">东</text>
    </g>
  </svg>
);

/* full-width glyphs take one size, the monospace letters another */
const Mixed = ({ t }) => t.split(/([\u4e00-\u9fff]+)/).map((s, i) => (i % 2 ? <i key={i}>{s}</i> : s));

const MENUS = ["文件(F)", "编辑(E)", "视图(V)", "插入(I)", "格式(O)", "工具(T)", "绘图(D)", "标注(N)", "修改(M)", "参数(P)", "窗口(W)", "帮助(H)", "Express"];

export default function App() {
  return (
    <>
      <Global />
      <Window>
        <TitleBar>
          <Group $pl={14}>
            <Logo aria-label="应用程序菜单">A</Logo>
            <Caret w={18} s={4} />
            {["new", "open", "save", "saveas", "openMobile", "saveMobile", "print", "undo"].map((n) => (
              <IconButton key={n} $w={24} aria-label={n}><Icon n={n} /></IconButton>
            ))}
            <Caret s={3} />
            <IconButton $w={24} $dim aria-label="重做"><Icon n="redo" /></IconButton>
            <Caret s={3} />
            <Caret w={16} s={4} />
            <Share><Icon n="send" />共享</Share>
          </Group>
          <Spacer />
          <Title><span>Autodesk AutoCAD 2025</span><span>某厂区框架办公楼结构设计图.dwg</span></Title>
          <Spacer />
          <Group>
            <RightCaret aria-label="展开搜索" />
            <SearchInput aria-label="搜索" placeholder="键入关键字或短语" />
            <IconButton $w={26} aria-label="搜索"><Icon n="search" s={16} /></IconButton>
            <Login><Icon n="user" />登录</Login>
            <Caret w={14} s={3} />
            <IconButton $w={28} aria-label="购物车"><Icon n="cart" s={15} /></IconButton>
            <IconButton $w={20} aria-label="Autodesk"><Icon n="adesk" s={16} /></IconButton>
            <Caret w={12} s={3} />
            <Rule />
            <IconButton $w={22} aria-label="帮助"><Icon n="help" s={17} /></IconButton>
            <Caret w={14} s={3} />
          </Group>
          <Group $pl={60}>
            {["min", "max", "close"].map((n) => <IconButton key={n} $w={46} aria-label={n}><Icon n={n} /></IconButton>)}
          </Group>
        </TitleBar>
        <MenuBar>
          <MenuList>{MENUS.map((m) => <a key={m} href="#menu">{m}</a>)}</MenuList>
          {["min", "restore", "close"].map((n) => <IconButton key={n} $w={32} $h={20} aria-label={n}><Icon n={n} /></IconButton>)}
        </MenuBar>
        <TabRow $h={26} $pt={2}>
          <IconButton $w={26} aria-label="菜单"><Icon n="menu" /></IconButton>
          <Slash />
          <Tab>开始</Tab>
          <Tab $on $pr={8}>某厂区框架办公楼结构设计图*<Icon n="tabClose" /></Tab>
          <IconButton $w={22} aria-label="新建选项卡"><Icon n="plus" s={16} /></IconButton>
          <Slash $m={9} />
        </TabRow>
        <Body>
          <ToolRows>
            <ToolRow>
              <Bar role="toolbar"><Grip /><Tools items={STD} /></Bar>
              <Bar role="toolbar">
                <Grip />
                <Tools items={["layerProps"]} />
                <Combo $w={300} $pl={3}>
                  {["bulb", "sun", "vpSun", "lock"].map((n) => <Icon key={n} n={n} s={16} />)}
                  <Swatch />
                  <select aria-label="图层"><option>0</option></select>
                </Combo>
                <Tools items={["layerCur", "layerPrev", "layerState"]} />
              </Bar>
              <Bar role="toolbar">
                <Grip />
                <Combo $w={150} $pl={3}><Swatch /><select aria-label="颜色"><option>ByLayer</option></select></Combo>
                <Sep />
                <Combo $w={160} $pl={4}><Stroke $w={60} /><select aria-label="线型"><option>ByLayer</option></select></Combo>
                <Sep />
                <Combo $w={125} $pl={4}><Stroke $w={35} /><select aria-label="线宽"><option>ByLayer</option></select></Combo>
                <Sep />
                <Combo $w={120} $pl={9} $off><select aria-label="打印样式" disabled><option>ByColor</option></select></Combo>
              </Bar>
            </ToolRow>
            <ToolRow $tight>
              <Bar role="toolbar">
                <Grip />
                <Tools items={DIM} />
                <Combo $w={120} $pl={18}><select aria-label="标注样式"><option>Standard</option></select></Combo>
                <Tools items={["dimStyle"]} />
              </Bar>
              <Bar role="toolbar"><Grip /><Tools items={SOLID} /></Bar>
            </ToolRow>
            <ToolRow>
              <Bar role="toolbar"><Grip /><Tools items={["bookPen", "bookOk", "bookLayers"]} /></Bar>
            </ToolRow>
          </ToolRows>
          <Work>
            <Side><Bar $v role="toolbar"><Grip $v /><Tools items={DRAW} /></Bar></Side>
            <Canvas>
              <Drawing />
              <CubeBox>
                <ViewCube />
                <Wcs>WCS<CaretShape $c="#cfcfd6" /></Wcs>
              </CubeBox>
              <CommandBox>
                <History>
                  <HistoryLine $c="#b4b4b4" $a={0.6}><Mixed t="命令: _textedit" /></HistoryLine>
                  <HistoryLine $c="#d8d8d8" $a={0.75}><Mixed t="当前设置: 编辑模式 = Multiple" /></HistoryLine>
                  <HistoryLine $c="#fff" $a={0.9}><Mixed t="选择注释对象或 [放弃(U)/模式(M)]: *取消*" /></HistoryLine>
                </History>
                <CommandBar>
                  <Grip />
                  <IconButton $w={26} aria-label="关闭"><Icon n="tabClose" /></IconButton>
                  <IconButton $w={20} aria-label="自定义"><Icon n="wrench" s={16} /></IconButton>
                  <CommandField>
                    <IconButton $w={18} aria-label="最近使用的命令"><Icon n="prompt" s={17} /></IconButton>
                    <CaretShape $c="#444" />
                    <input aria-label="命令" placeholder="键入命令" />
                    <IconButton $w={16} aria-label="历史记录"><UpShape /></IconButton>
                  </CommandField>
                </CommandBar>
              </CommandBox>
            </Canvas>
            <Side $pl={4}><Bar $v role="toolbar"><Grip $v /><Tools items={MODIFY} /></Bar></Side>
          </Work>
        </Body>
        <TabRow $h={24}>
          <IconButton $w={26} aria-label="布局菜单"><Icon n="menu" /></IconButton>
          <Group $pl={4}>
            <Tab $on>模型</Tab>
            <Tab>布局1</Tab>
          </Group>
          <Slash $m={6} />
          <IconButton $w={28} aria-label="新建布局"><Icon n="plus" s={16} /></IconButton>
          <Slash $m={6} />
        </TabRow>
        <Status>
          <Cell $grow $mr={1} />
          <Cell $w={210} $end="flex-end" $pr={5}>-14001.2383, -285673.9078, 0.0000</Cell>
          <Cell $w={30} as="button">模型</Cell>
          <StatusCell items="stGrid stDots v" />
          <Cluster>
            <StatusCell items="stInfer *stDyn stOrtho stPolar v stIso v" pr={2} />
            <StatusCell items="stTrack *stOsnap v" />
            <StatusCell items="stLwt" />
            <StatusCell items="*stTransp" />
            <StatusCell items="stCycle" />
            <StatusCell items="st3d v" />
          </Cluster>
          <StatusCell items="*stUcs stFilt v *stGizmo v" />
          <Cell>
            <StatusCell items="*stAnno1 stAnno2 stAnno3" />
            <ScaleButton>1:1 / 100%<CaretShape $s={5} /></ScaleButton>
          </Cell>
          <Cluster>
            <StatusCell items="gear v" />
            <StatusCell items="plus" />
          </Cluster>
          <Cluster>
            <Cell>
              <IconButton $w={24} $h={24} aria-label="单位"><Icon n="ruler" /></IconButton>
              <UnitLabel><select aria-label="图形单位"><option>小数</option></select><CaretShape $s={5} /></UnitLabel>
            </Cell>
            <StatusCell items="stQp" />
          </Cluster>
          <Cluster>
            <StatusCell items="stLock v" />
            <StatusCell items="stIso2" />
          </Cluster>
          <StatusCell items="*stPerf" />
          <StatusCell items="stCad stWarn" w={28} />
          <StatusCell items="stFull" />
          <StatusCell items="menu" />
        </Status>
      </Window>
    </>
  );
}
